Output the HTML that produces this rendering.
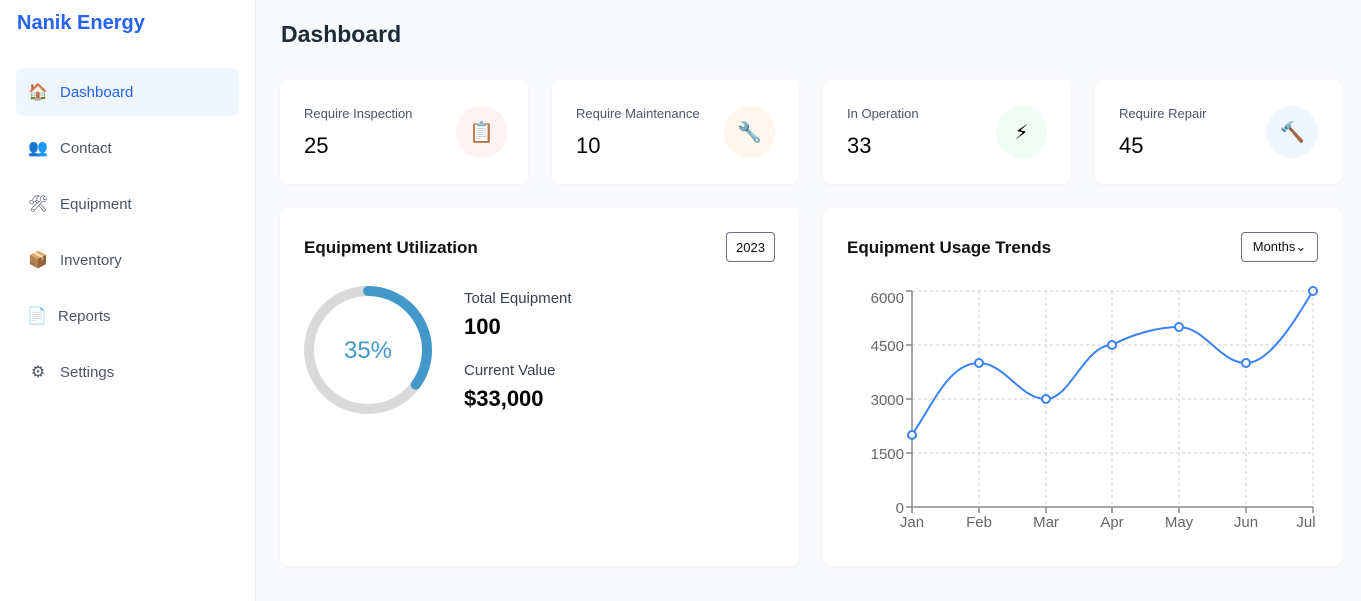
<!DOCTYPE html>
<html><head><meta charset="utf-8"><style>
*{margin:0;padding:0;box-sizing:border-box}
body{width:1361px;height:601px;overflow:hidden;background:#f8f9fb;font-family:"Liberation Sans","DejaVu Sans",sans-serif;position:relative}
.sb{position:absolute;left:0;top:0;width:256px;height:601px;background:#fff;border-right:1px solid #e5e7eb}
.logo{position:absolute;left:17px;top:12px;font-size:20px;font-weight:bold;color:#2563eb}
.nav{position:absolute;left:16px;width:223px;height:48px;border-radius:8px;font-size:15px;color:#4b5563;display:flex;align-items:center}
.nav.act{background:#eff6ff;color:#2563eb}
.nav .ic{width:44px;display:flex;justify-content:center;font-size:16px;margin-left:0}
.card{position:absolute;background:#fff;border-radius:8px;box-shadow:0 1px 2px rgba(0,0,0,.04)}
.lbl{position:absolute;left:24px;top:26px;font-size:13px;color:#4b5563}
.num{position:absolute;left:24px;top:53px;font-size:22px;color:#000}
.circ{position:absolute;top:26px;width:51px;height:52px;border-radius:50%;display:flex;align-items:center;justify-content:center;font-size:20px}
h1{position:absolute;left:281px;top:21px;font-size:23px;font-weight:bold;color:#1f2937}
.ttl{position:absolute;left:24px;top:30px;font-size:17px;font-weight:bold;color:#111}
.sel{position:absolute;border:1px solid #6b7280;border-radius:4px;font-size:13px;color:#111;display:flex;align-items:center;justify-content:center}
</style></head><body>
<div class="sb">
<div class="logo">Nanik Energy</div>
<div class="nav act" style="top:68px"><span class="ic">🏠</span>Dashboard</div>
<div class="nav" style="top:124px"><span class="ic">👥</span>Contact</div>
<div class="nav" style="top:180px"><span class="ic">🛠</span>Equipment</div>
<div class="nav" style="top:236px"><span class="ic">📦</span>Inventory</div>
<div class="nav" style="top:292px"><span class="ic" style="width:42px">📄</span>Reports</div>
<div class="nav" style="top:348px"><span class="ic">⚙</span>Settings</div>
</div>
<h1>Dashboard</h1>
<div class="card" style="left:280px;top:80px;width:248px;height:104px"><div class="lbl">Require Inspection</div><div class="num">25</div><div class="circ" style="left:176px;background:#fef2f2">📋</div></div>
<div class="card" style="left:552px;top:80px;width:247px;height:104px"><div class="lbl">Require Maintenance</div><div class="num">10</div><div class="circ" style="left:172px;background:#fff7ed">🔧</div></div>
<div class="card" style="left:823px;top:80px;width:248px;height:104px"><div class="lbl">In Operation</div><div class="num">33</div><div class="circ" style="left:173px;background:#f0fdf4">⚡</div></div>
<div class="card" style="left:1095px;top:80px;width:247px;height:104px"><div class="lbl">Require Repair</div><div class="num">45</div><div class="circ" style="left:172px;background:#eff6ff">🔨</div></div>

<div class="card" style="left:280px;top:208px;width:519px;height:358px">
<div class="ttl">Equipment Utilization</div>
<div class="sel" style="left:446px;top:24px;width:49px;height:30px">2023</div>
<svg style="position:absolute;left:20px;top:74px" width="136" height="136">
<circle cx="68" cy="68" r="59" fill="none" stroke="#d9d9d9" stroke-width="10"/>
<circle cx="68" cy="68" r="59" fill="none" stroke="#4299c9" stroke-width="10" stroke-linecap="round" stroke-dasharray="129.7 400" transform="rotate(-90 68 68)"/>
<text x="68" y="76" text-anchor="middle" font-size="24" fill="#4299c9" font-family="Liberation Sans">35%</text>
</svg>
<div style="position:absolute;left:184px;top:82px;font-size:15px;color:#374151">Total Equipment</div>
<div style="position:absolute;left:184px;top:106px;font-size:22px;font-weight:bold;color:#000">100</div>
<div style="position:absolute;left:184px;top:154px;font-size:15px;color:#374151">Current Value</div>
<div style="position:absolute;left:184px;top:178px;font-size:22px;font-weight:bold;color:#000">$33,000</div>
</div>

<div class="card" style="left:823px;top:208px;width:519px;height:358px">
<div class="ttl">Equipment Usage Trends</div>
<div class="sel" style="left:418px;top:24px;width:77px;height:30px">Months⌄</div>
</div>
<svg style="position:absolute;left:0;top:0" width="1361" height="601" font-family="Liberation Sans">
<g stroke="#ccc" stroke-dasharray="3 3" stroke-width="1">
<line x1="912" y1="291" x2="1313" y2="291"/><line x1="912" y1="345" x2="1313" y2="345"/><line x1="912" y1="399" x2="1313" y2="399"/><line x1="912" y1="453" x2="1313" y2="453"/>
<line x1="979" y1="291" x2="979" y2="507"/><line x1="1046" y1="291" x2="1046" y2="507"/><line x1="1112" y1="291" x2="1112" y2="507"/><line x1="1179" y1="291" x2="1179" y2="507"/><line x1="1246" y1="291" x2="1246" y2="507"/><line x1="1313" y1="291" x2="1313" y2="507"/>
</g>
<g stroke="#888" stroke-width="1.5"><line x1="912" y1="291" x2="912" y2="507"/><line x1="912" y1="507" x2="1313" y2="507"/>
<line x1="906" y1="291" x2="912" y2="291"/><line x1="906" y1="345" x2="912" y2="345"/><line x1="906" y1="399" x2="912" y2="399"/><line x1="906" y1="453" x2="912" y2="453"/><line x1="906" y1="507" x2="912" y2="507"/>
<line x1="912" y1="507" x2="912" y2="513"/><line x1="979" y1="507" x2="979" y2="513"/><line x1="1046" y1="507" x2="1046" y2="513"/><line x1="1112" y1="507" x2="1112" y2="513"/><line x1="1179" y1="507" x2="1179" y2="513"/><line x1="1246" y1="507" x2="1246" y2="513"/><line x1="1313" y1="507" x2="1313" y2="513"/></g>
<g fill="#666" font-size="15" text-anchor="end"><text x="904" y="303">6000</text><text x="904" y="351">4500</text><text x="904" y="405">3000</text><text x="904" y="459">1500</text><text x="904" y="513">0</text></g>
<g fill="#666" font-size="15" text-anchor="middle"><text x="912" y="527">Jan</text><text x="979" y="527">Feb</text><text x="1046" y="527">Mar</text><text x="1112" y="527">Apr</text><text x="1179" y="527">May</text><text x="1246" y="527">Jun</text><text x="1306" y="527">Jul</text></g>
<path d="M912 435 C935 400,950 363,979 363 C1005 363,1020 399,1046 399 C1070 399,1085 345,1112 345 C1135 333,1160 327,1179 327 C1205 327,1220 363,1246 363 C1270 363,1295 320,1313 291" fill="none" stroke="#3b82f6" stroke-width="2"/>
<g fill="#fff" stroke="#3b82f6" stroke-width="2"><circle cx="912" cy="435" r="4"/><circle cx="979" cy="363" r="4"/><circle cx="1046" cy="399" r="4"/><circle cx="1112" cy="345" r="4"/><circle cx="1179" cy="327" r="4"/><circle cx="1246" cy="363" r="4"/><circle cx="1313" cy="291" r="4"/></g>
</svg>
</body></html>
